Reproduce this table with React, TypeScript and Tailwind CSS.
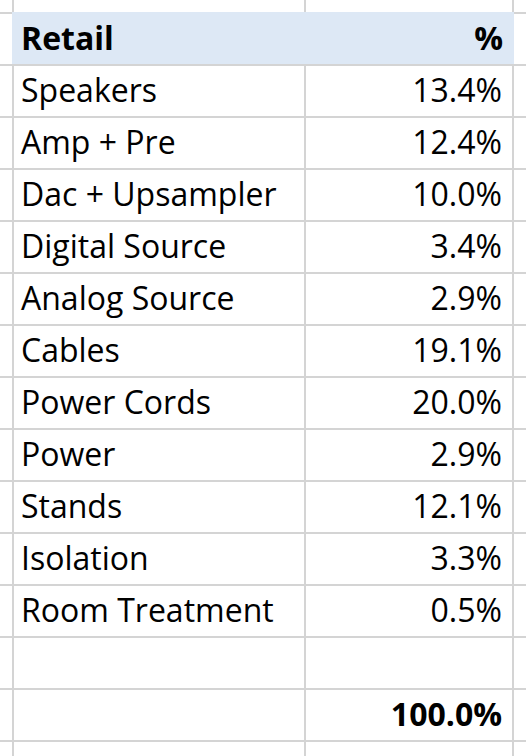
const rows: [string, string][] = [
  ['Speakers', '13.4%'],
  ['Amp + Pre', '12.4%'],
  ['Dac + Upsampler', '10.0%'],
  ['Digital Source', '3.4%'],
  ['Analog Source', '2.9%'],
  ['Cables', '19.1%'],
  ['Power Cords', '20.0%'],
  ['Power', '2.9%'],
  ['Stands', '12.1%'],
  ['Isolation', '3.3%'],
  ['Room Treatment', '0.5%'],
  ['', ''],
]

export default function App() {
  return (
    <div
      className="w-[526px] h-[756px] overflow-hidden bg-white text-black"
      style={{ fontFamily: '"Open Sans", Lato, sans-serif' }}
    >
      <div className="grid grid-cols-[12px_290px_206px_12px] grid-rows-[12px_repeat(14,50px)_14px] gap-[2px] bg-[#d4d4d4] text-[32px] leading-none">
        {/* top partial row */}
        <div className="bg-white" />
        <div className="bg-white" />
        <div className="bg-white" />
        <div className="bg-white" />

        {/* header */}
        <div className="bg-white" />
        <div className="col-span-2 flex items-center justify-between bg-[#dde8f5] pl-[7px] pr-[9px] pb-[3px] font-bold shadow-[-2px_0_0_#dde8f5,2px_0_0_#dde8f5,0_-2px_0_#dde8f5,-2px_-2px_0_#dde8f5,2px_-2px_0_#dde8f5]">
          <span>Retail</span>
          <span>%</span>
        </div>
        <div className="bg-white" />

        {rows.map(([name, pct], i) => (
          <div key={i} className="contents">
            <div className="bg-white" />
            <div className="flex items-center bg-white pl-[7px] pb-[3px]">{name}</div>
            <div className="flex items-center justify-end bg-white pr-[10px] pb-[3px]">{pct}</div>
            <div className="bg-white" />
          </div>
        ))}

        {/* total */}
        <div className="bg-white" />
        <div className="bg-white" />
        <div className="flex items-center justify-end bg-white pr-[10px] pb-[3px] font-bold">100.0%</div>
        <div className="bg-white" />

        {/* bottom partial row */}
        <div className="bg-white" />
        <div className="bg-white" />
        <div className="bg-white" />
        <div className="bg-white" />
      </div>
    </div>
  )
}
